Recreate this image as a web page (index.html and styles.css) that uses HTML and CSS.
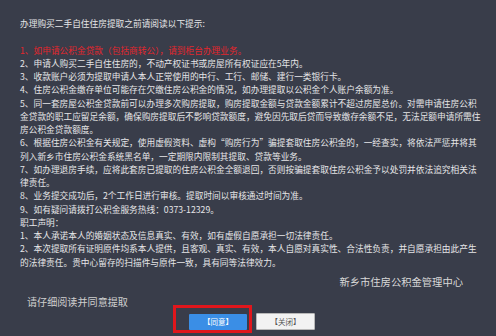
FILE: index.html
```html
<!DOCTYPE html>
<html lang="zh-CN">
<head>
  <meta charset="UTF-8" />
  <title>购房提取提示</title>
  <link rel="stylesheet" href="styles.css">
</head>
<body>

  <div class="notice">
    <p>办理购买二手自住住房提取之前请阅读以下提示:</p>
    <p class="blank"></p>
    <p class="warn">1、如申请公积金贷款（包括商转公），请到柜台办理业务。</p>
    <p>2、申请人购买二手自住住房的，不动产权证书或房屋所有权证应在5年内。</p>
    <p>3、收款账户必须为提取申请人本人正常使用的中行、工行、邮储、建行一类银行卡。</p>
    <p>4、住房公积金缴存单位可能存在欠缴住房公积金的情况，如办理提取以公积金个人账户余额为准。</p>
    <p>5、同一套房屋公积金贷款前可以办理多次购房提取，购房提取金额与贷款金额累计不超过房屋总价。对需申请住房公积金贷款的职工应留足余额，确保购房提取后不影响贷款额度，避免因先取后贷而导致缴存余额不足，无法足额申请所需住房公积金贷款额度。</p>
    <p>6、根据住房公积金有关规定，使用虚假资料、虚构“购房行为”骗提套取住房公积金的，一经查实，将依法严惩并将其列入新乡市住房公积金系统黑名单，一定期限内限制其提取、贷款等业务。</p>
    <p>7、如办理退房手续，应将此套房已提取的住房公积金全额退回，否则按骗提套取住房公积金予以处罚并依法追究相关法律责任。</p>
    <p>8、业务提交成功后，2个工作日进行审核。提取时间以审核通过时间为准。</p>
    <p>9、如有疑问请拨打公积金服务热线：0373-12329。</p>
    <p>职工声明：</p>
    <p>1、本人承诺本人的婚姻状态及信息真实、有效，如有虚假自愿承担一切法律责任。</p>
    <p>2、本次提取所有证明原件均系本人提供，且客观、真实、有效，本人自愿对真实性、合法性负责，并自愿承担由此产生的法律责任。贵中心留存的扫描件与原件一致，具有同等法律效力。</p>
  </div>

  <div class="sign">新乡市住房公积金管理中心</div>

  <div class="prompt">请仔细阅读并同意提取</div>

  <div class="actions">
    <div class="focus">
      <button type="button" class="btn btn-agree">【同意】</button>
    </div>
    <button type="button" class="btn btn-close">【关闭】</button>
  </div>

</body>
</html>
```

FILE: styles.css
```css
html, body {
  margin: 0;
  height: 100%;
}
body {
  background-color: #393d4a;
  color: #e6e6e8;
  font-family: "Noto Sans CJK SC", "Noto Sans", sans-serif;
  padding: 17px 13px 0 20px;
  box-sizing: border-box;
  overflow: hidden;
}
.notice p {
  margin: 0;
  font-size: 8.7px;
  line-height: 13.25px;
}
.notice .blank {
  height: 13.25px;
}
.notice .warn {
  color: #e3262d;
}
.sign {
  margin-top: 6px;
  text-align: right;
  padding-right: 20px;
  font-size: 10.3px;
  line-height: 14px;
  color: #d8d8d8;
}
.prompt {
  margin-top: 6px;
  padding-left: 7px;
  font-size: 10.1px;
  line-height: 14px;
  color: #cfcfcf;
}
.actions {
  display: flex;
  align-items: flex-end;
  gap: 4px;
  margin-top: -4px;
  padding-left: 153px;
}
.focus {
  border: 3px solid #e0161c;
  padding: 6px 2px 0 13px;
  display: flex;
}
.btn {
  font-family: "Noto Sans CJK SC", sans-serif;
  font-size: 7.5px;
  height: 16px;
  padding: 0;
  cursor: pointer;
  border-radius: 1px;
}
.btn-agree {
  width: 58px;
  border: none;
  color: #fff;
  background-color: #3a8ee6;
}
.btn-close {
  width: 59px;
  height: 17px;
  margin-bottom: 3px;
  border: 1px solid #b8b8b8;
  color: #555;
  background-color: #f2f2f2;
}
```
